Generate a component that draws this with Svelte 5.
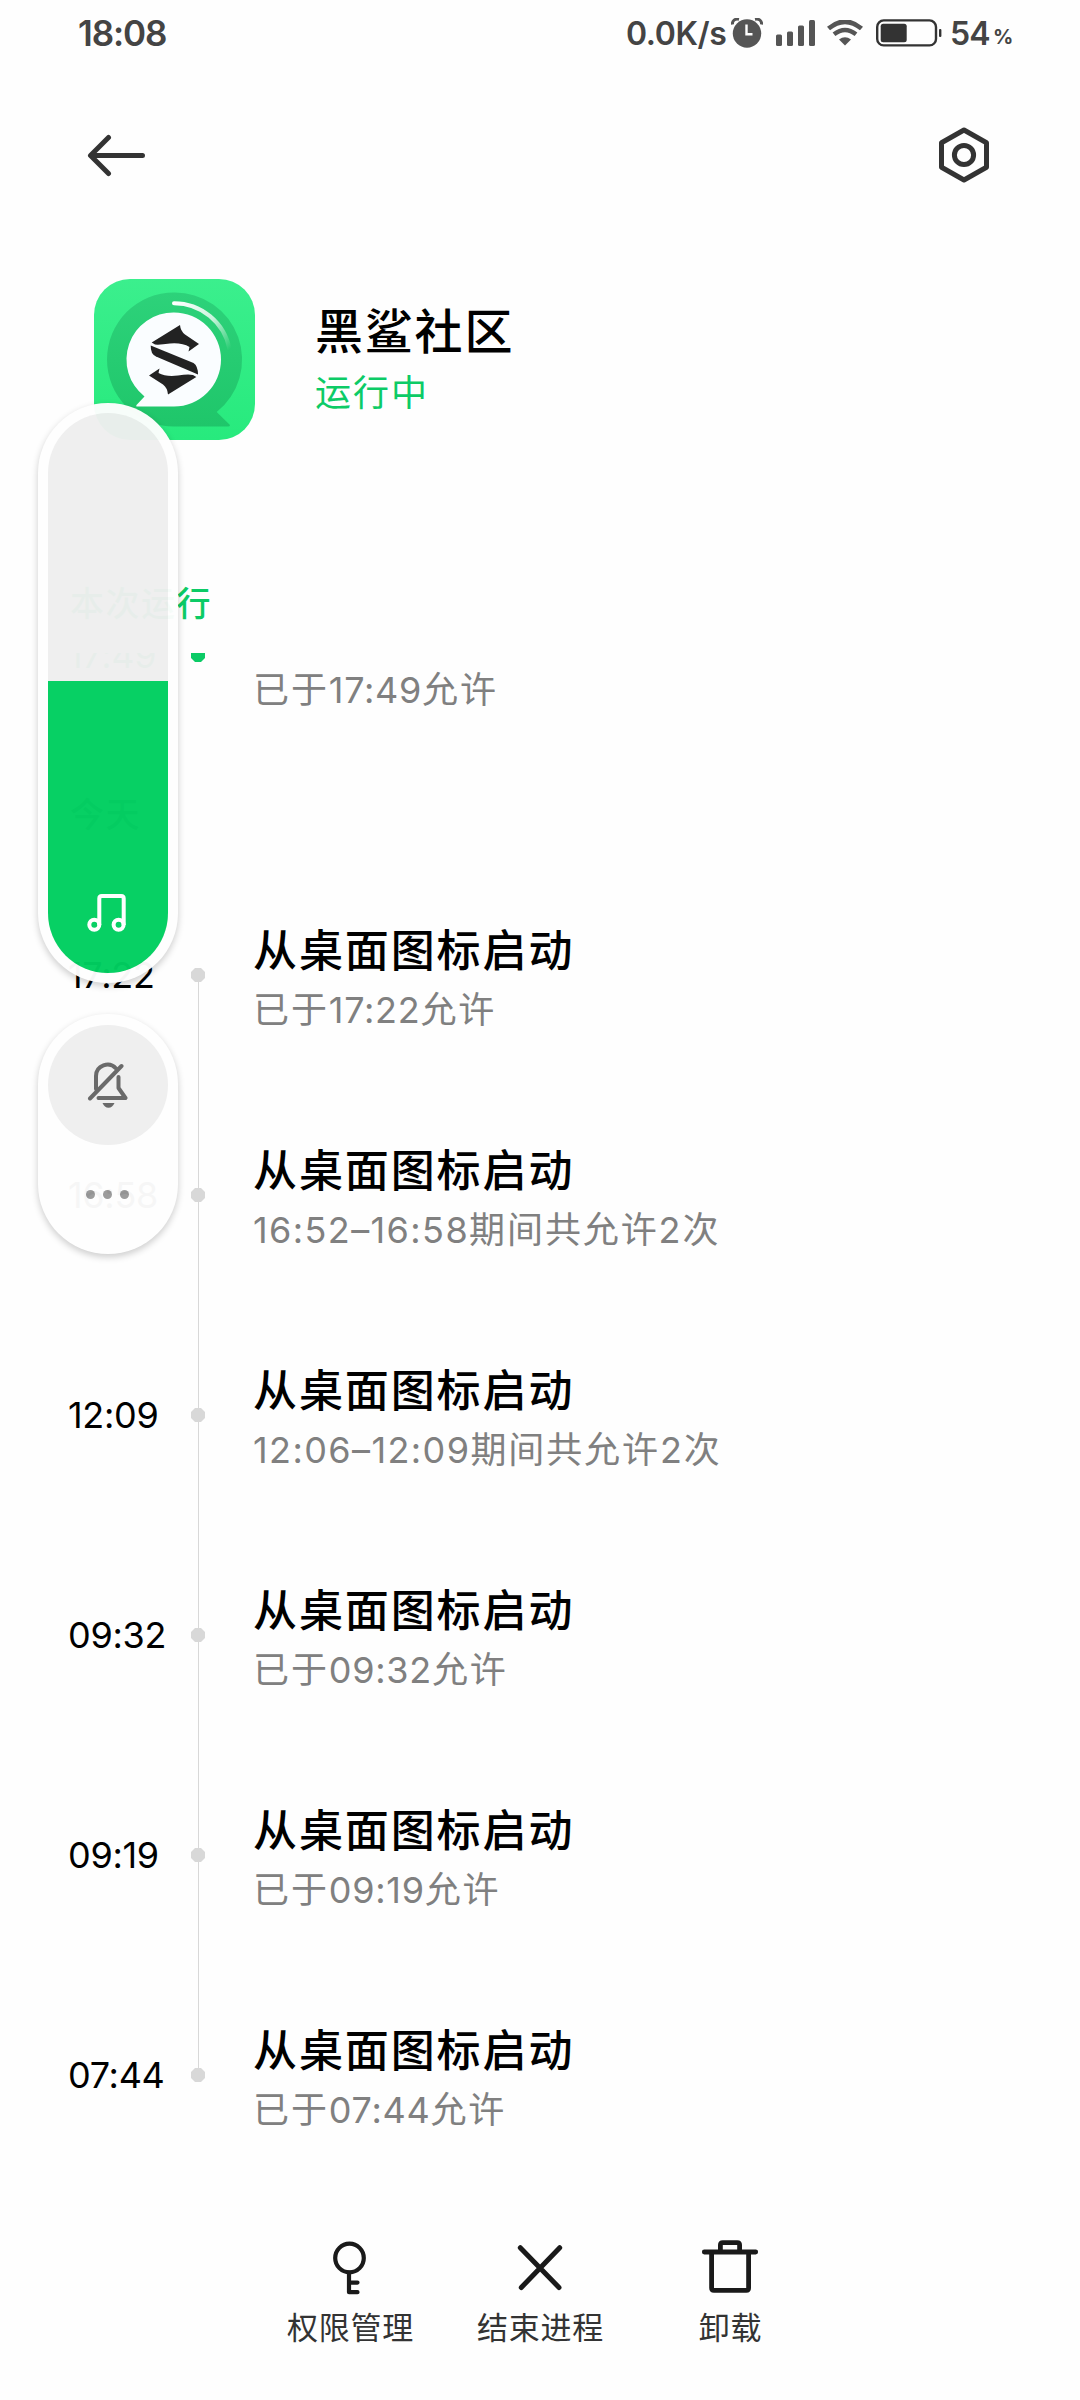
<script lang="ts">
	type Entry = {
		time: string;
		title: string;
		before?: string;
		span: string;
		after: string;
	};

	const current: Entry = {
		time: "17:49",
		title: "",
		before: "已于",
		span: "17:49",
		after: "允许"
	};

	const title = "从桌面图标启动";

	const today: Entry[] = [
		{ time: "17:22", title, before: "已于", span: "17:22", after: "允许" },
		{ time: "16:58", title, span: "16:52–16:58", after: "期间共允许2次" },
		{ time: "12:09", title, span: "12:06–12:09", after: "期间共允许2次" },
		{ time: "09:32", title, before: "已于", span: "09:32", after: "允许" },
		{ time: "09:19", title, before: "已于", span: "09:19", after: "允许" },
		{ time: "07:44", title, before: "已于", span: "07:44", after: "允许" }
	];

	const volume = 52.1;
</script>

{#snippet row(entry: Entry, first: boolean, last: boolean, active: boolean)}
	<li class="row">
		<span class="time" class:active>{entry.time}</span>
		<div class="marker">
			<span class="line" class:hidden={first}></span>
			<svg class="dot" class:active width="14" height="14" viewBox="0 0 14 14">
				<path d="M4 0h6l4 4v6l-4 4H4l-4-4V4z" />
			</svg>
			<span class="line" class:hidden={last}></span>
		</div>
		<div class="body">
			<div class="title">{entry.title}</div>
			<p class="detail">{entry.before ?? ""}<span class="digits" class:range={!entry.before}>{entry.span}</span>{entry.after}</p>
		</div>
	</li>
{/snippet}

<main class="screen">
	<div class="status-bar">
		<span class="clock">18:08</span>
		<div class="status-right">
			<span class="speed">0.0K/s</span>
			<svg class="alarm" width="32" height="30" viewBox="0 0 32 30">
				<circle cx="16" cy="15.5" r="14.2" fill="#555" />
				<path d="M1.500 6.500C1 2.500 4 .500 8 1.300M30.500 6.500C31 2.500 28 .500 24 1.300" stroke="#555" stroke-width="3" fill="none" />
				<path d="M15.500 6.500V16.200H21.500" stroke="#fefefe" stroke-width="2.400" fill="none" />
			</svg>
			<svg class="signal" width="40" height="26" viewBox="0 0 40 26" fill="#555">
				<rect x="0" y="14.500" width="6" height="11.500" rx="1.500" />
				<rect x="11" y="11.500" width="6" height="14.500" rx="1.500" />
				<rect x="22" y="5.500" width="6" height="20.500" rx="1.500" />
				<rect x="33" y="0" width="6" height="26" rx="1.500" />
			</svg>
			<svg class="wifi" width="36" height="26" viewBox="0 0 36 26">
				<path d="M1.500 8.500Q18-5 34.500 8.500" fill="none" stroke="#555" stroke-width="4.800" />
				<path d="M7 14.300Q18 5.500 29 14.300" fill="none" stroke="#555" stroke-width="4.400" />
				<path d="M12 19.500Q18 15 24 19.500L18 25.500z" fill="#555" />
			</svg>
			<svg class="battery" width="66" height="28" viewBox="0 0 66 28">
				<rect x="1.200" y="1.400" width="58.800" height="25" rx="6.500" fill="none" stroke="#333" stroke-width="2.400" />
				<rect x="4.700" y="4.700" width="26" height="18.600" rx="2.500" fill="#333" />
				<rect x="63" y="10" width="2.400" height="8" rx="1" fill="#333" />
			</svg>
			<span class="level">54</span>
			<span class="percent">%</span>
		</div>
	</div>

	<header class="toolbar">
		<svg width="60" height="60" viewBox="0 0 60 60" fill="none" stroke="#333" stroke-width="5" stroke-linecap="round" stroke-linejoin="round">
			<path d="M55.500 30.500H4.500M21.500 12.500L3.500 30.500L21.500 48.500" />
		</svg>
		<svg width="54" height="60" viewBox="0 0 54 60" fill="none" stroke="#333" stroke-width="5" stroke-linejoin="round">
			<path d="M27 5L49.500 17.700V42.300L27 55L4.500 42.300V17.700z" />
			<circle cx="27" cy="30" r="9.600" />
		</svg>
	</header>

	<section class="app">
		<svg class="app-icon" width="161" height="161" viewBox="0 0 161 161">
			<defs>
				<linearGradient id="tile" x1="0" y1="0" x2="0" y2="1">
					<stop offset="0" stop-color="#3bef8d" />
					<stop offset="1" stop-color="#27ea7d" />
				</linearGradient>
				<linearGradient id="bubble" x1="0" y1="0" x2="0" y2="1">
					<stop offset="0" stop-color="#2dd27a" />
					<stop offset="1" stop-color="#1fc66a" />
				</linearGradient>
				<linearGradient id="shine" x1="80" y1="24" x2="136" y2="70" gradientUnits="userSpaceOnUse">
					<stop offset="0" stop-color="#fff" />
					<stop offset=".55" stop-color="#fff" stop-opacity=".75" />
					<stop offset="1" stop-color="#fff" stop-opacity="0" />
				</linearGradient>
			</defs>
			<rect width="161" height="161" rx="36" fill="url(#tile)" />
			<path d="M80 13.500A67 67 0 0 1 122.700 133L136 146Q136 147.500 134 147.500H80A67 67 0 0 1 80 13.500z" fill="url(#bubble)" />
			<path d="M80 33.500A47 47 0 0 1 80 127.500H43Q41.500 127.500 42.500 126L50.500 117.500A47 47 0 0 1 80 33.500z" fill="#fafdff" />
			<path d="M80 24.200A56.500 56.500 0 0 1 135.500 70" fill="none" stroke="url(#shine)" stroke-width="4" stroke-linecap="round" />
			<g fill="#222">
				<path d="M57.700 63.500L86 46Q86.500 52 91 55.500L105 65L94.500 72.500L95.500 68Q88 63.500 76 64.500Q66 66 61 65.500z" />
				<path d="M56.700 66.500L99.500 84Q104 87 104 95.500L62 77.500Q56.500 75 56.700 66.500z" />
				<path d="M102.300 98L74 115.500Q73.500 109 69 105.500L55 96.500L65.500 89.500L64.500 94Q72 98 84 96.500Q94 95 99 96z" />
			</g>
		</svg>
		<div class="app-info">
			<h1>黑鲨社区</h1>
			<p>运行中</p>
		</div>
	</section>

	<h2 class="group running">本次运行</h2>
	<ul class="list clipped">
		{@render row(current, true, true, true)}
	</ul>

	<h2 class="group today">今天</h2>
	<ul class="list">
		{#each today as entry, i}
			{@render row(entry, i === 0, i === today.length - 1, false)}
		{/each}
	</ul>

	<nav class="actions">
		<div class="action">
			<svg width="60" height="60" viewBox="0 0 60 60" fill="none" stroke="#1a1a1a" stroke-width="4.200" stroke-linecap="round" stroke-linejoin="round">
				<circle cx="29.500" cy="20" r="14.300" />
				<path d="M29 34.500V54.200H37.500M29 44.600H37.500" />
			</svg>
			<span>权限管理</span>
		</div>
		<div class="action">
			<svg width="60" height="60" viewBox="0 0 60 60" fill="none" stroke="#1a1a1a" stroke-width="5" stroke-linecap="round">
				<path d="M10.300 9.700L49 49.500M49.700 9.700L11.300 49.500" />
			</svg>
			<span>结束进程</span>
		</div>
		<div class="action">
			<svg width="60" height="60" viewBox="0 0 60 60" fill="none" stroke="#1a1a1a" stroke-width="4.800" stroke-linecap="round" stroke-linejoin="round">
				<path d="M4.300 14H55.700M20.400 13V7Q20.400 4.600 22.800 4.600H37.200Q39.600 4.600 39.600 7V13M11.600 14V50Q11.600 52.300 13.900 52.300H46.300Q48.600 52.300 48.600 50V14" />
			</svg>
			<span>卸载</span>
		</div>
	</nav>

	<!-- volume overlay floating above the page -->
	<aside class="volume">
		<div class="slider">
			<div class="track">
				<div class="fill" style="height: {volume}%">
					<svg width="40" height="40" viewBox="0 0 40 40" fill="none" stroke="#fff" stroke-width="4">
						<circle cx="7.300" cy="31.800" r="5" />
						<circle cx="31.600" cy="31.800" r="5" />
						<path d="M12.300 32V5.500Q12.300 3 14.800 3H34.200Q36.700 3 36.700 5.500V32" />
					</svg>
				</div>
			</div>
		</div>
		<div class="modes">
			<div class="mute">
				<svg width="44" height="48" viewBox="0 0 44 48" fill="none" stroke="#666" stroke-width="4" stroke-linecap="round" stroke-linejoin="round">
					<path d="M10 28V15A11.500 11.500 0 0 1 30 7.500M32.500 16V27L39.500 37H12.500M4 37.500L35.500 5" />
					<path d="M16.500 42H28.500Q26.500 46.700 22.500 46.700Q18.500 46.700 16.500 42z" fill="#666" stroke="none" />
				</svg>
			</div>
			<div class="more">
				<i></i><i></i><i></i>
			</div>
		</div>
	</aside>
</main>

<style>
:global(body) {
	background: #fefefe;
}

.screen {
	position: relative;
	width: 1080px;
	height: 2400px;
	overflow: hidden;
	display: flex;
	flex-direction: column;
	background: #fefefe;
	color: #000;
	font-family: Inter, "Noto Sans CJK SC", sans-serif;
}

h1,
h2,
p,
ul {
	margin: 0;
	padding: 0;
	font-weight: 400;
}

.status-bar {
	display: flex;
	justify-content: space-between;
	height: 68px;
	padding: 0 69px 0 78px;
	color: #444;
	font-weight: 600;
	line-height: 67px;
}

.clock {
	font-size: 35px;
	letter-spacing: -1.1px;
}

.status-right {
	display: flex;
	align-items: center;
	height: 66px;
}

.speed {
	width: 105px;
	font-size: 32px;
	letter-spacing: -0.4px;
}

.alarm {
	margin-right: 13px;
}

.signal {
	margin-right: 11px;
}

.wifi {
	margin-right: 13px;
}

.battery {
	margin-right: 8px;
}

.level {
	width: 43px;
	font-size: 32px;
	letter-spacing: -1px;
}

.percent {
	width: 18px;
	padding-top: 9px;
	font-size: 20px;
	font-weight: 700;
}

.toolbar {
	display: flex;
	justify-content: space-between;
	align-items: center;
	height: 174px;
	padding: 0 89px 0 87px;
	box-sizing: border-box;
}

.app {
	display: flex;
	align-items: center;
	height: 234px;
	padding-left: 94px;
	box-sizing: border-box;
}

.app-info {
	margin-left: 60px;
	padding-top: 4px;
}

.app-info h1 {
	font-size: 48px;
	font-weight: 500;
	line-height: 64px;
	letter-spacing: 1.8px;
}

.app-info p {
	color: #0ccb66;
	font-size: 36px;
	line-height: 58px;
	letter-spacing: 2px;
}

.group {
	padding-left: 70px;
	font-size: 34px;
	font-weight: 500;
	line-height: 50px;
	letter-spacing: 1.5px;
}

.running {
	margin-top: 103px;
	color: #0ccb66;
}

.today {
	margin-top: 25px;
	color: #808080;
}

.list {
	list-style: none;
}

.clipped {
	height: 112px;
	margin-top: 24px;
	display: flex;
	flex-direction: column;
	justify-content: flex-end;
	overflow: hidden;
}

.today + .list {
	margin-top: 25px;
}

.row {
	display: flex;
	flex-shrink: 0;
	height: 220px;
}

.time {
	width: 123px;
	padding-left: 68px;
	font-size: 36px;
	line-height: 220px;
	letter-spacing: -0.3px;
}

.time.active {
	color: #0ccb66;
}

.marker {
	display: flex;
	flex-direction: column;
	align-items: center;
	width: 15px;
}

.line {
	flex: 1;
	width: 1px;
	background: #d8d8d8;
}

.line.hidden {
	visibility: hidden;
}

.dot {
	display: block;
	margin-right: 1px;
	fill: #d8d8d8;
}

.dot.active {
	fill: #0ccb66;
}

.body {
	padding: 56px 0 0 47px;
}

.title {
	height: 60px;
	font-size: 44px;
	font-weight: 500;
	line-height: 60px;
	letter-spacing: 1.9px;
}

.detail {
	color: #808080;
	font-size: 36px;
	line-height: 58px;
	letter-spacing: 1.9px;
}

.digits {
	letter-spacing: 0.7px;
}

.digits.range {
	letter-spacing: 1.4px;
}

.actions {
	display: flex;
	justify-content: center;
	margin-top: 53px;
}

.action {
	display: flex;
	flex-direction: column;
	align-items: center;
	width: 190px;
}

.action span {
	color: #333;
	font-size: 31px;
	line-height: 44px;
	letter-spacing: 0.7px;
	margin: 8px 0 0 1px;
}

.volume {
	position: absolute;
	top: 403px;
	left: 38px;
	width: 140px;
	display: flex;
	flex-direction: column;
	gap: 31px;
	opacity: 0.97;
}

.slider,
.modes {
	padding: 10px;
	border-radius: 70px;
	background: #fefefe;
	box-shadow: 0 3px 7px rgba(0, 0, 0, 0.2);
}

.track {
	display: flex;
	align-items: flex-end;
	height: 560px;
	border-radius: 60px;
	overflow: hidden;
	background: #efefef;
}

.fill {
	display: flex;
	align-items: flex-end;
	justify-content: center;
	width: 100%;
	background: #00cf60;
}

.fill svg {
	margin: 0 3px 40px 0;
}

.modes {
	height: 219px;
	padding-top: 11px;
}

.mute {
	display: flex;
	align-items: center;
	justify-content: center;
	height: 120px;
	border-radius: 50%;
	background: #efefef;
}

.mute svg {
	margin-right: 1px;
}

.more {
	display: flex;
	align-items: center;
	justify-content: center;
	gap: 8px;
	height: 98px;
	margin-right: 2px;
}

.more i {
	width: 9px;
	height: 9px;
	border-radius: 50%;
	background: #999;
}
</style>
